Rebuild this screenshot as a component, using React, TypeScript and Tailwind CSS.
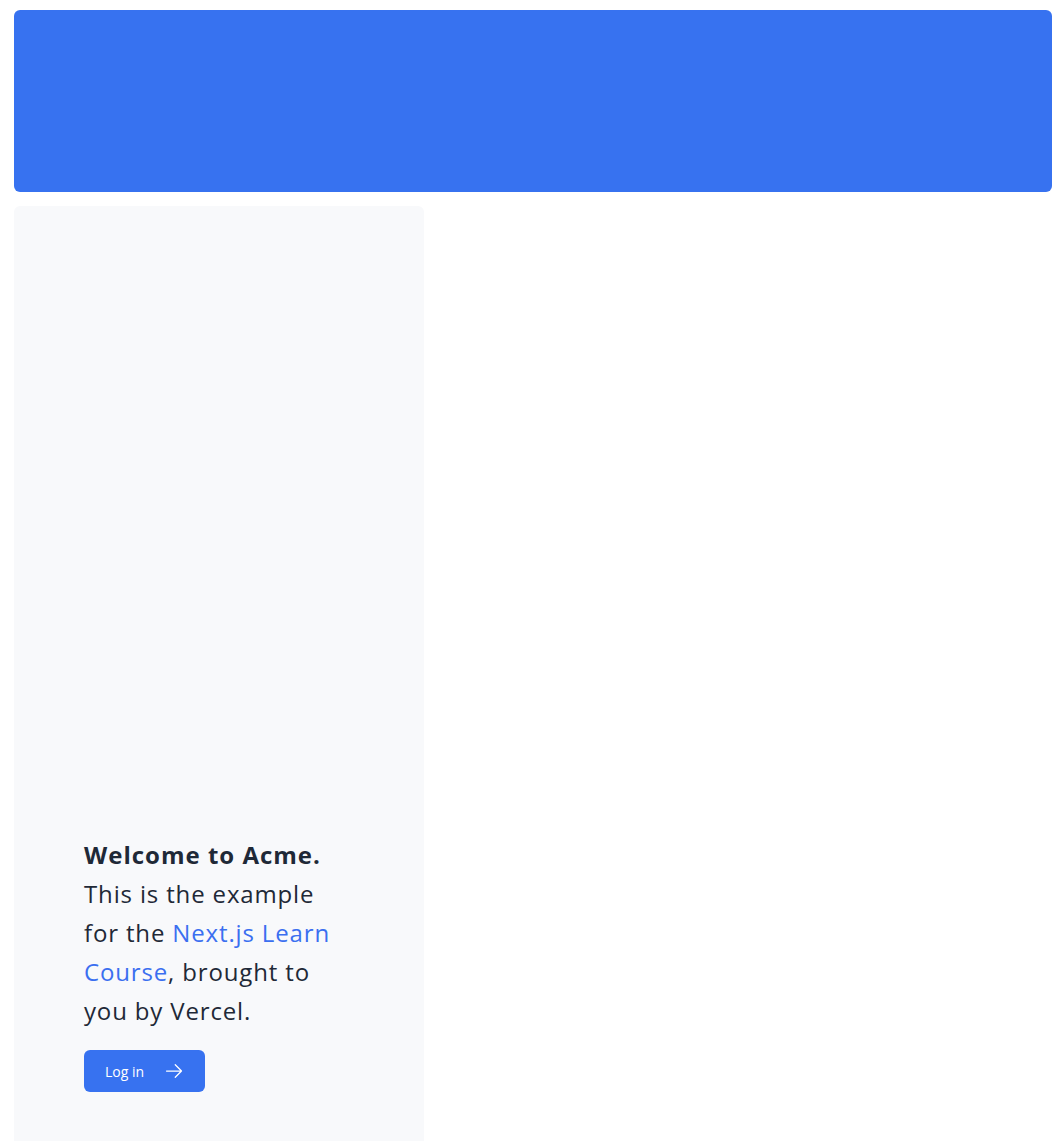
const ArrowRight = () => (
  <svg viewBox="0 0 24 24" fill="none" stroke="currentColor" strokeWidth={1.5} className="h-5 w-5">
    <path strokeLinecap="round" strokeLinejoin="round" d="M13.5 4.5 21 12m0 0-7.5 7.5M21 12H3" />
  </svg>
)

export default function App() {
  return (
    <main
      className="flex min-h-screen flex-col pl-[14px] pr-[10px] pt-[10px]"
      style={{ fontFamily: '"Open Sans", "Noto Sans CJK KR", sans-serif' }}
    >
      <div className="h-[182px] shrink-0 rounded-md bg-[#3772f0]" />
      <div className="mt-[14px] flex flex-row gap-4">
        <div className="flex w-[410px] flex-col gap-[20px] rounded-md bg-[#f8f9fb] px-[70px] pb-[200px] pt-[629px]">
          <p className="text-[24px] leading-[39px] tracking-[0.85px] text-[#1f2937]">
            <strong className="tracking-[1px]">Welcome to Acme.</strong> This is the example for the{' '}
            <a href="#" className="text-[#3b6ff0]">
              Next.js Learn Course
            </a>
            , brought to you by Vercel.
          </p>
          <a
            href="#"
            className="flex h-[42px] w-[121px] items-center gap-5 self-start rounded-md bg-[#3772f0] pl-[21px] text-[14px] text-white"
          >
            <span>Log in</span>
            <ArrowRight />
          </a>
        </div>
      </div>
    </main>
  )
}
